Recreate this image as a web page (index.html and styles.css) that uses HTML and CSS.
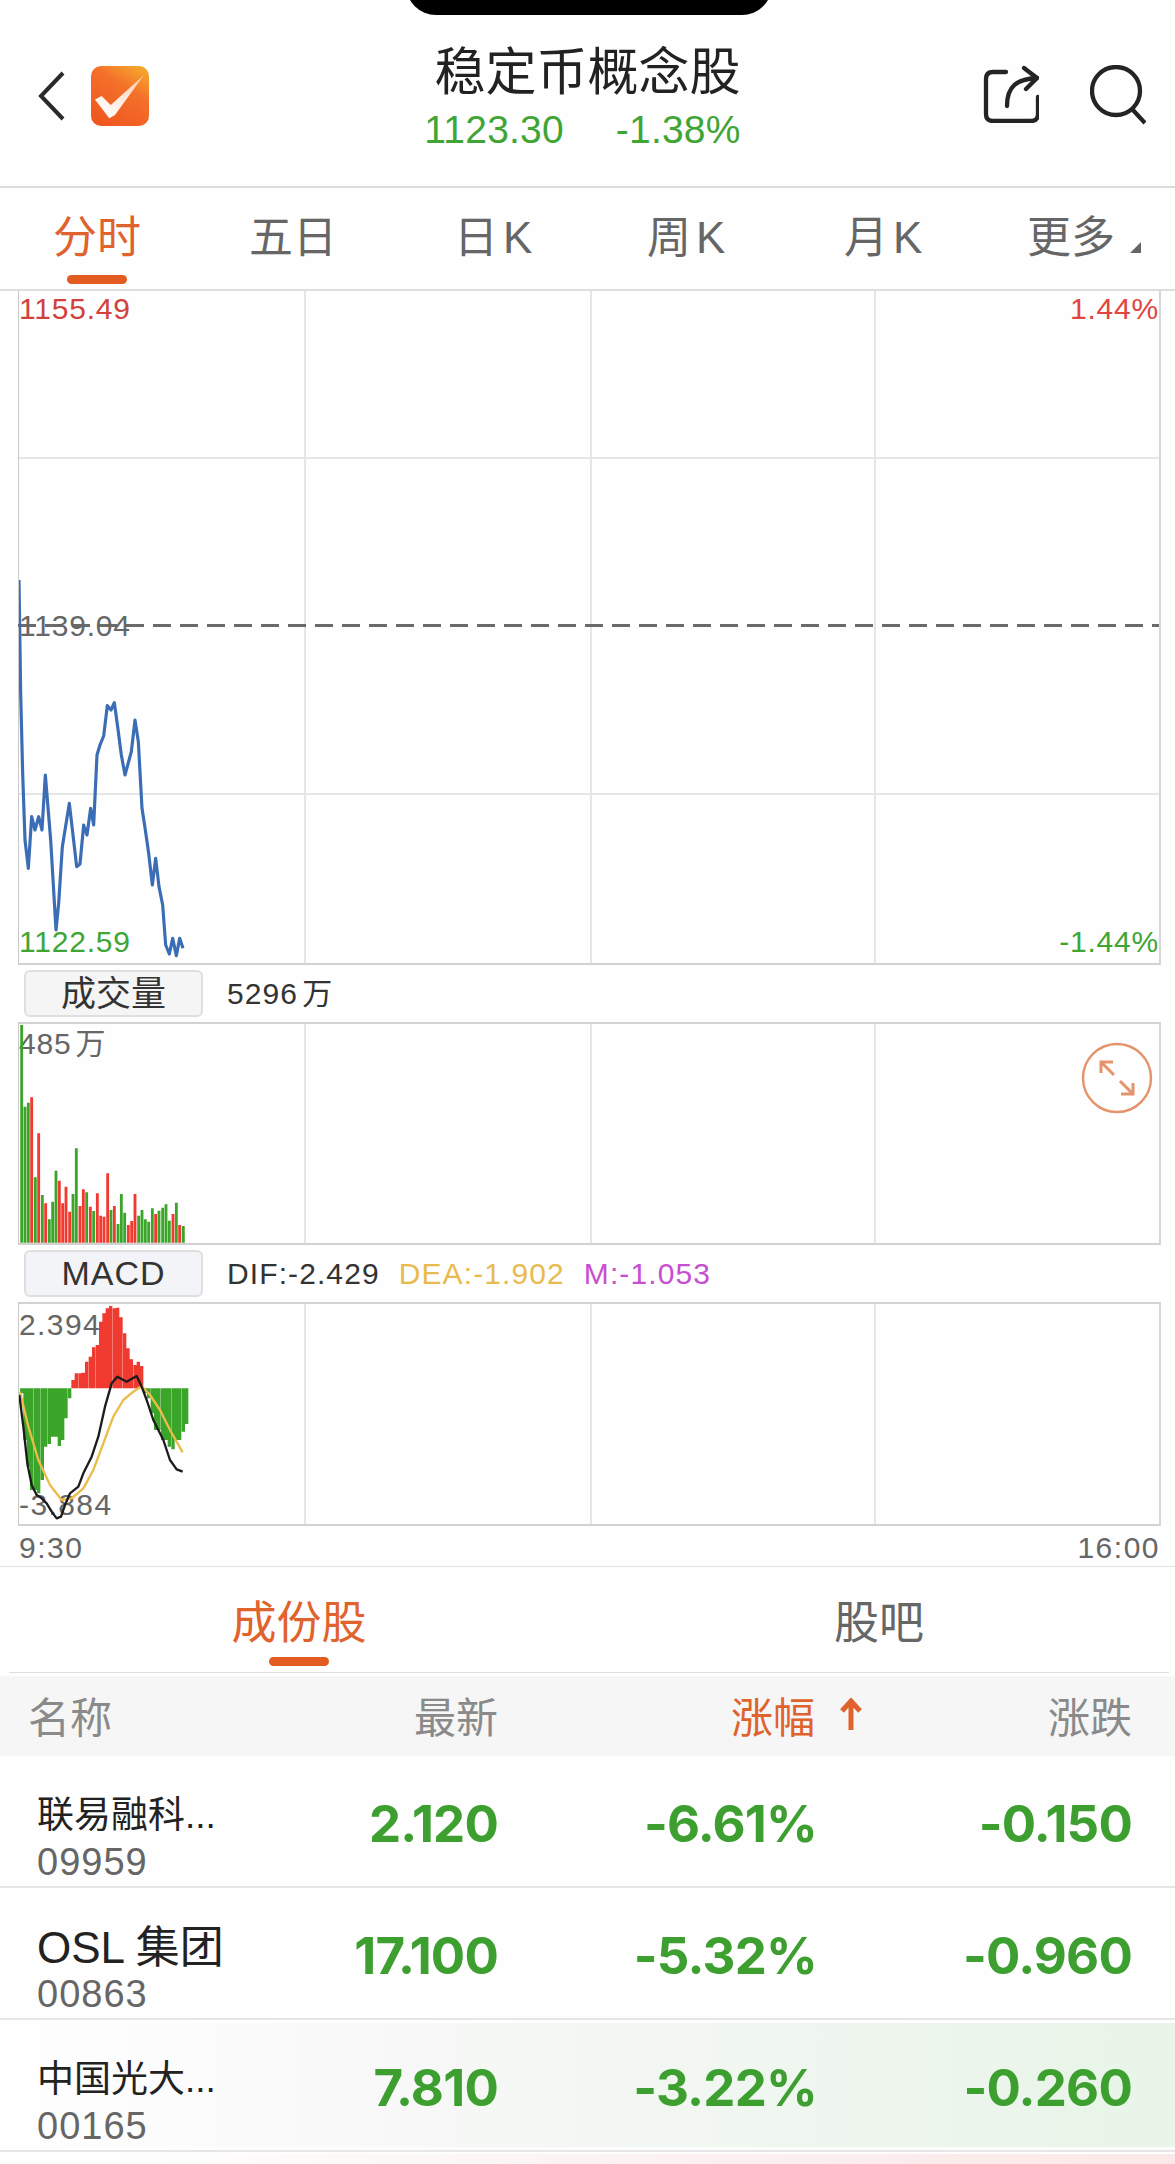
FILE: index.html
```html
<!DOCTYPE html>
<html lang="zh-CN">
  <head>
    <meta charset="UTF-8" />
    <title>稳定币概念股</title>
    <link rel="stylesheet" href="styles.css">
  </head>

  <body>
    <div class="notch"></div>

    <header class="top-bar">
      <div class="top-left">
        <svg class="back" viewBox="0 0 28 50"><path d="M25 2 3 25l22 23" /></svg>
        <svg class="logo" viewBox="0 0 58 60">
          <defs>
            <linearGradient id="logoBg" x1="0.2" y1="1" x2="0.8" y2="0">
              <stop offset="0" stop-color="#f0561f" />
              <stop offset="0.65" stop-color="#f4702a" />
              <stop offset="1" stop-color="#f6a52c" />
            </linearGradient>
            <linearGradient id="logoTick" x1="0.2" y1="1" x2="1" y2="0">
              <stop offset="0" stop-color="#fff" />
              <stop offset="0.55" stop-color="#fde4d4" />
              <stop offset="1" stop-color="#fbc9a4" />
            </linearGradient>
          </defs>
          <rect width="58" height="60" rx="10" fill="url(#logoBg)" />
          <path d="M4 33.5 10.7 30l9 9L53 9 24 49l-5.700 3.300z" fill="url(#logoTick)" />
        </svg>
      </div>

      <div class="top-title">
        <h1>稳定币概念股</h1>
        <div class="top-quote">
          <span>1123.30</span>
          <span>-1.38%</span>
        </div>
      </div>

      <div class="top-right">
        <svg class="icon-share" viewBox="0 0 58 58">
          <path d="M25 7H12Q5 7 5 14V49Q5 56 12 56H50Q57 56 57 49V32" />
          <path d="M26 41C26 21 36 14 56 13" />
          <path d="M43 3 56 13 45 24" />
        </svg>
        <svg class="icon-search" viewBox="0 0 56 60">
          <circle cx="26" cy="26" r="24" />
          <path d="M42 44 55 58" />
        </svg>
      </div>
    </header>

    <nav class="period-tabs">
      <a class="period active">分时</a>
      <a class="period">五日</a>
      <a class="period">日<span class="k">K</span></a>
      <a class="period">周<span class="k">K</span></a>
      <a class="period">月<span class="k">K</span></a>
      <a class="period">更多<svg class="more-arrow" viewBox="0 0 11 11"><path d="M11 0V11H0z" /></svg></a>
    </nav>

    <section class="charts">
      <div class="pane pane-price">
        <div class="dash-line"></div>
        <span class="axis axis-high">1155.49</span>
        <span class="axis axis-high-pct">1.44%</span>
        <span class="axis axis-mid">1139.04</span>
        <span class="axis axis-low">1122.59</span>
        <span class="axis axis-low-pct">-1.44%</span>
        <svg class="plot" width="200" height="672" viewBox="57 -807 600 2016">
          <polyline class="price-line" points="57,60 62,400 68,640 75,840 85,925 95,770 105,810 116,770 126,810 136,645 152,840 168,1110 176,1030 187,860 208,730 230,920 240,912 251,795 261,825 272,745 281,795 291,585 300,555 311,528 322,437 333,450 343,428 353,500 364,585 375,645 394,575 405,480 415,545 426,745 436,810 446,880 457,975 467,895 477,980 488,1035 497,1155 508,1182 518,1135 529,1187 539,1135 549,1165" />
        </svg>
      </div>

      <div class="pane-head">
        <span class="pane-btn">成交量</span>
        <span class="pane-info">5296<span class="unit">万</span></span>
      </div>

      <div class="pane pane-volume">
        <span class="axis axis-vol">485<span class="unit">万</span></span>
        <svg class="plot" width="200" height="219" viewBox="57 192 600 657">
          <path class="bar-green" d="M65 848V195M75 848V440M85 848V428M106 848V652M127 848V705M148 848V778M158 848V725M168 848V632M219 848V702M229 848V565M260 848V697M281 848V753M333 848V750M354 848V792M364 848V702M374 848V758M416 848V767M426 848V750M436 848V778M446 848V785M457 848V745M477 848V752M488 848V743M498 848V733M508 848V782M529 848V728M550 848V798" />
          <path class="bar-red" d="M95 848V412M116 848V520M137 848V730M178 848V662M188 848V730M198 848V680M209 848V755M240 848V738M250 848V688M271 848V740M292 848V700M302 848V767M312 848V770M323 848V640M343 848V738M385 848V795M395 848V783M405 848V702M467 848V762M519 848V762M539 848V795" />
        </svg>
        <svg class="expand" viewBox="0 0 72 72">
          <circle cx="36" cy="36" r="34" />
          <path class="expand-arrows" d="M20 20 33 33M20 31V20H32M52 52 39 39M52 41V52H40" />
        </svg>
      </div>

      <div class="pane-head">
        <span class="pane-btn pane-btn-macd">MACD</span>
        <span class="pane-info">DIF:-2.429</span>
        <span class="pane-info dea">DEA:-1.902</span>
        <span class="pane-info macd-m">M:-1.053</span>
      </div>

      <div class="pane pane-macd">
        <span class="axis axis-macd-high">2.394</span>
        <span class="axis axis-macd-low">-3.884</span>
        <svg class="plot" width="200" height="220" viewBox="57 192 600 660">
          <path class="bar-green macd-bar" d="M65 445V460M75 445V600M85 445V680M95 445V750M106 445V750M116 445V760M127 445V720M137 445V620M148 445V612M158 445V590M168 445V590M178 445V618M188 445V600M198 445V535M209 445V475M436 445V460M446 445V475M457 445V520M467 445V570M477 445V570M488 445V600M498 445V600M508 445V620M519 445V628M529 445V600M539 445V600M550 445V575M560 445V552" />
          <path class="bar-red macd-bar" d="M219 445V420M229 445V400M240 445V400M250 445V398M260 445V365M271 445V350M281 445V322M292 445V315M302 445V245M312 445V220M322 445V205M332 445V198M343 445V205M353 445V203M363 445V232M374 445V280M384 445V325M394 445V358M405 445V375M415 445V365M425 445V378" />
          <polyline class="line-dea" points="60,455 85,560 115,660 150,735 185,780 215,775 250,745 280,690 310,610 340,530 370,480 400,455 425,438 450,465 480,510 510,570 548,637" />
          <polyline class="line-dif" points="58,465 70,560 82,670 95,735 110,765 125,775 140,790 155,815 170,835 183,830 195,795 210,760 235,740 250,700 275,650 295,590 315,500 335,430 352,410 380,425 410,408 425,440 440,480 460,540 490,600 510,660 530,688 548,695" />
        </svg>
      </div>

      <div class="time-row">
        <span>9:30</span>
        <span>16:00</span>
      </div>
    </section>

    <nav class="list-tabs">
      <a class="list-tab active">成份股</a>
      <a class="list-tab">股吧</a>
    </nav>

    <div class="list-head stock-grid">
      <span>名称</span>
      <span class="num">最新</span>
      <span class="num sorted">涨幅<svg class="sort-arrow" viewBox="0 0 22 32"><path d="M11 32V4M2 13 11 3l9 10" /></svg></span>
      <span class="num">涨跌</span>
    </div>

    <div class="stock-row stock-grid">
      <div class="stock-name">
        <div class="name">联易融科...</div>
        <div class="code">09959</div>
      </div>
      <span class="val">2.120</span>
      <span class="val">-6.61%</span>
      <span class="val">-0.150</span>
    </div>

    <div class="stock-row stock-grid">
      <div class="stock-name">
        <div class="name name-big">OSL 集团</div>
        <div class="code">00863</div>
      </div>
      <span class="val">17.100</span>
      <span class="val">-5.32%</span>
      <span class="val">-0.960</span>
    </div>

    <div class="stock-row stock-grid stock-row-tint">
      <div class="stock-name">
        <div class="name">中国光大...</div>
        <div class="code">00165</div>
      </div>
      <span class="val">7.810</span>
      <span class="val">-3.22%</span>
      <span class="val">-0.260</span>
    </div>

    <div class="next-row"></div>
  </body>
</html>
```

FILE: styles.css
```css
* {
  box-sizing: border-box;
}

html,
body {
  margin: 0;
  padding: 0;
}

body {
  width: 1175px;
  height: 2164px;
  overflow: hidden;
  position: relative;
  background: #fefefe;
  color: #222;
  font-family: "Liberation Sans", "Noto Sans CJK SC", sans-serif;
}

.notch {
  position: absolute;
  top: -30px;
  left: 406px;
  width: 366px;
  height: 45px;
  background: #000;
  border-radius: 0 0 30px 30px;
}

/* top bar */
.top-bar {
  display: grid;
  grid-template-columns: 1fr auto 1fr;
  height: 188px;
  border-bottom: 2px solid #dcdcdc;
}

.top-left {
  display: flex;
  align-items: center;
  gap: 25px;
  height: 60px;
  margin-top: 66px;
  padding-left: 38px;
}

.back {
  width: 28px;
  height: 50px;
  fill: none;
  stroke: #2a2a2a;
  stroke-width: 4;
}

.logo {
  width: 58px;
  height: 60px;
}

.top-title {
  padding-top: 45px;
  text-align: center;
}

.top-title h1 {
  margin: 0;
  font-size: 51px;
  font-weight: 400;
  line-height: 56px;
}

.top-quote {
  display: flex;
  justify-content: flex-end;
  gap: 52px;
  margin: 7px 0 0 -10px;
  color: #3fa535;
  font-size: 39px;
  line-height: 44px;
  letter-spacing: 0.200px;
}

.top-right {
  display: flex;
  justify-content: flex-end;
  gap: 51px;
  padding: 65px 29px 0 0;
}

.icon-share,
.icon-search {
  fill: none;
  stroke: #242424;
  stroke-width: 4.300;
}

.icon-share {
  width: 58px;
  height: 58px;
  stroke-linecap: round;
  stroke-linejoin: round;
}

.icon-search {
  width: 56px;
  height: 60px;
}

/* period tabs */
.period-tabs {
  display: grid;
  grid-template-columns: 196px 205px 193px 197px 183px auto;
  justify-items: start;
  height: 103px;
  padding: 25px 0 0 53px;
  border-bottom: 2px solid #dedede;
}

.period {
  display: block;
  color: #666;
  font-size: 44px;
  line-height: 50px;
}

.period.active {
  color: #e0622c;
}

.k {
  margin-left: 5px;
}

.period.active::after,
.list-tab.active::after {
  content: "";
  display: block;
  width: 60px;
  height: 9px;
  margin: 12px auto 0;
  border-radius: 5px;
  background: #e25c22;
}

.more-arrow {
  width: 11px;
  height: 11px;
  margin-left: 15px;
  fill: #666;
}

/* chart panes */
.charts {
  padding-left: 18px;
}

.pane {
  position: relative;
  width: 1143px;
  border-left: 1px solid #c9c9c9;
  border-right: 2px solid #d6d6d6;
  border-bottom: 2px solid #d2d2d2;
  background:
    linear-gradient(#e6e6e6, #e6e6e6) 285px 0 / 2px 100% no-repeat,
    linear-gradient(#e6e6e6, #e6e6e6) 571px 0 / 2px 100% no-repeat,
    linear-gradient(#e6e6e6, #e6e6e6) 855px 0 / 2px 100% no-repeat;
}

.pane-price {
  height: 674px;
  background:
    linear-gradient(#e6e6e6, #e6e6e6) 0 166px / 100% 2px no-repeat,
    linear-gradient(#e6e6e6, #e6e6e6) 0 502px / 100% 2px no-repeat,
    linear-gradient(#e6e6e6, #e6e6e6) 285px 0 / 2px 100% no-repeat,
    linear-gradient(#e6e6e6, #e6e6e6) 571px 0 / 2px 100% no-repeat,
    linear-gradient(#e6e6e6, #e6e6e6) 855px 0 / 2px 100% no-repeat;
}

.pane-volume {
  height: 223px;
  border-top: 2px solid #d2d2d2;
}

.pane-macd {
  height: 224px;
  border-top: 2px solid #d2d2d2;
}

.pane-head {
  display: flex;
  align-items: center;
  height: 57px;
  padding-left: 6px;
}

.pane-btn {
  width: 179px;
  height: 47px;
  margin-right: 24px;
  border: 2px solid #dfdfdf;
  border-radius: 6px;
  background: #f5f5f5;
  color: #333;
  font-size: 35px;
  line-height: 43px;
  text-align: center;
}

.pane-btn-macd {
  background: #f3f4f7;
  font-size: 34px;
  letter-spacing: 1px;
}

.pane-info {
  margin-right: 19px;
  color: #333;
  font-size: 30px;
  line-height: 40px;
  letter-spacing: 1.100px;
}

.pane-info.dea {
  color: #e9bb4e;
}

.pane-info.macd-m {
  color: #c84fd2;
}

.unit {
  margin-left: 4px;
  font-size: 30px;
}

.axis {
  position: absolute;
  color: #666;
  font-size: 30px;
  line-height: 30px;
  letter-spacing: 0.800px;
}

.axis-high {
  top: 3px;
  left: 0;
  color: #d2413b;
}

.axis-high-pct {
  top: 3px;
  right: 0;
  color: #e0453e;
}

.axis-mid {
  top: 320px;
  left: 0;
}

.axis-low {
  top: 636px;
  left: 0;
  color: #3fa535;
}

.axis-low-pct {
  top: 636px;
  right: 0;
  color: #3fa535;
}

.axis-vol {
  top: 5px;
  left: 0;
}

.axis-macd-high {
  top: 6px;
  left: 0;
  letter-spacing: 1.400px;
}

.axis-macd-low {
  top: 186px;
  left: 0;
  letter-spacing: 1.400px;
}

.dash-line {
  position: absolute;
  top: 333px;
  left: -1px;
  right: 0;
  height: 3px;
  background: repeating-linear-gradient(to right, #6a6a6a 0 18px, transparent 18px 27px);
}

.plot {
  position: absolute;
  top: 0;
  left: 0;
}

.price-line {
  fill: none;
  stroke: #3a6db5;
  stroke-width: 9.500;
  stroke-linejoin: round;
}

.bar-green,
.bar-red {
  fill: none;
  stroke-width: 8.500;
}

.macd-bar {
  stroke-width: 10;
}

.bar-green {
  stroke: #3ba52a;
}

.bar-red {
  stroke: #f0392f;
}

.line-dif,
.line-dea {
  fill: none;
  stroke-linejoin: round;
  stroke-width: 7;
}

.line-dif {
  stroke: #1c1c1c;
}

.line-dea {
  stroke: #ebbd48;
}

.expand {
  position: absolute;
  top: 18px;
  left: 1062px;
  width: 72px;
  height: 72px;
  fill: none;
  stroke: #e5936a;
  stroke-width: 2.400;
}

.expand-arrows {
  stroke-width: 3;
}

.time-row {
  display: flex;
  justify-content: space-between;
  width: 1175px;
  height: 41px;
  margin-left: -18px;
  padding: 7px 15px 0 19px;
  color: #666;
  font-size: 30px;
  line-height: 30px;
  letter-spacing: 1.500px;
  border-bottom: 1px solid #e2e2e2;
}

/* list tabs */
.list-tabs {
  display: grid;
  grid-template-columns: 1fr 1fr;
  height: 106px;
  margin: 0 6px 0 9px;
  padding-top: 32px;
  border-bottom: 1px solid #dedede;
}

.list-tab {
  display: block;
  color: #666;
  font-size: 45px;
  line-height: 50px;
  text-align: center;
}

.list-tab.active {
  color: #e0622c;
}

.list-tab.active::after {
  margin-top: 8px;
}

/* stock list */
.stock-grid {
  display: grid;
  grid-template-columns: 221px 240px 319px 315px;
  padding: 0 43px 0 37px;
}

.list-head {
  align-items: center;
  height: 80px;
  margin-top: 3px;
  padding-left: 28px;
  padding-bottom: 4px;
  grid-template-columns: 230px 240px 317px 317px;
  background: #f6f6f6;
  color: #8a8a8a;
  font-size: 42px;
}

.num {
  display: flex;
  align-items: center;
  justify-content: flex-end;
}

.sorted {
  color: #e0622c;
}

.sort-arrow {
  flex: none;
  width: 22px;
  height: 32px;
  margin: 0 -47px 0 25px;
  fill: none;
  stroke: #e0622c;
  stroke-width: 5;
}

.stock-row {
  align-items: center;
  height: 132px;
  border-bottom: 2px solid #e6e6e6;
}

.stock-row-tint {
  background: linear-gradient(to right, #fefefe 3%, #f7f8f7 35%, #f0f6f0 65%, #e8f5e8 100%) 0 3px / 100% 124px no-repeat;
}

.stock-name {
  align-self: start;
  padding-top: 37px;
}

.name {
  color: #222;
  font-size: 37px;
  line-height: 46px;
  white-space: nowrap;
}

.name-big {
  font-size: 44px;
}

.code {
  margin-top: 3px;
  color: #666;
  font-size: 38px;
  line-height: 40px;
  letter-spacing: 1px;
}

.val {
  padding-top: 5px;
  color: #3c9f2f;
  font-family: Inter, "Liberation Sans", sans-serif;
  font-size: 51px;
  font-weight: 700;
  letter-spacing: -0.800px;
  text-align: right;
}

.next-row {
  height: 10px;
  margin-top: 2px;
  background: linear-gradient(to right, #fefefe 10%, #fbeeee 70%, #fbe9e9 100%);
}
```
